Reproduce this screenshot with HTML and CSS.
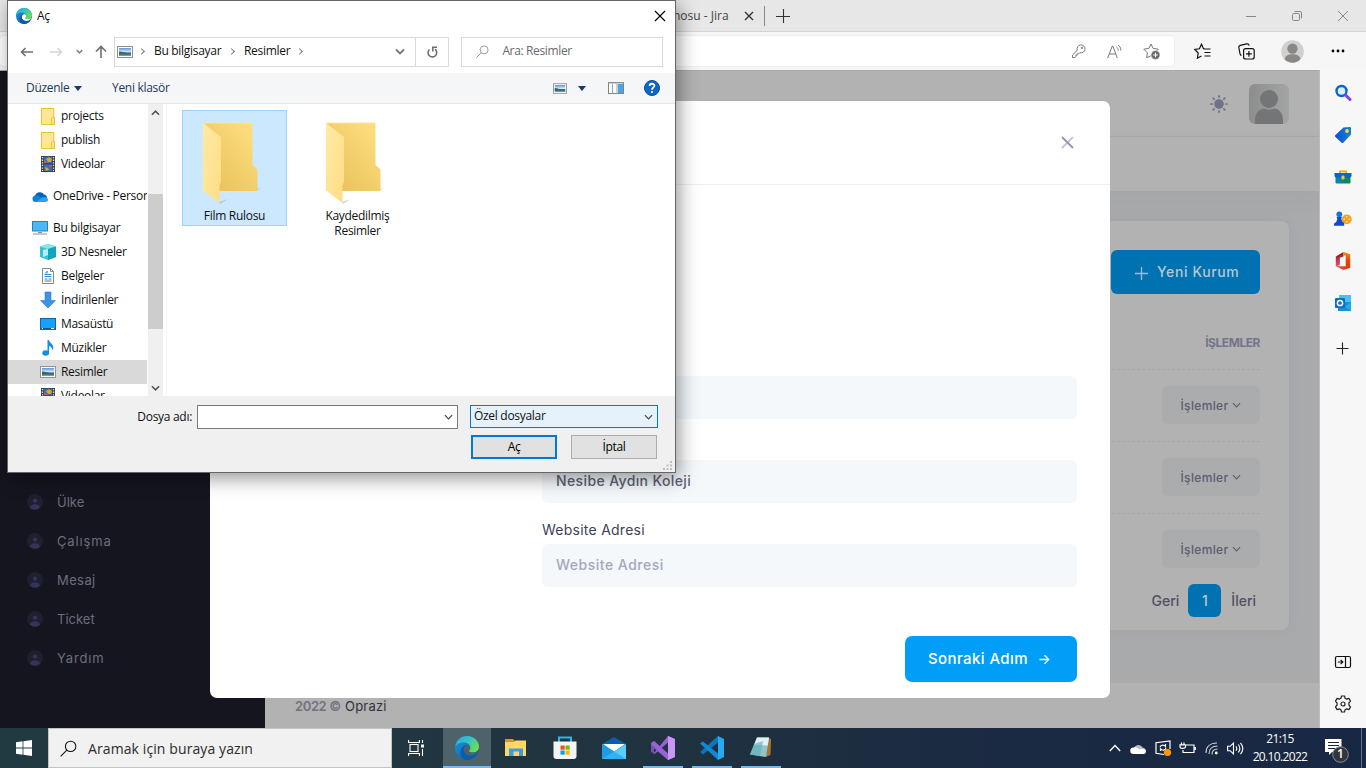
FILE: index.html
```html
<!DOCTYPE html>
<html lang="tr">
<head>
<meta charset="utf-8">
<title>Kurumlar</title>
<link rel="stylesheet" href="styles.css">
</head>
<body>
<svg class="defs" width="0" height="0">
  <defs>
    <linearGradient id="edgeBlue" x1="0" y1="0" x2="1" y2="1"><stop offset="0" stop-color="#1b9de2"/><stop offset="1" stop-color="#0c4a9c"/></linearGradient>
    <linearGradient id="edgeGreen" x1="0" y1="0" x2="1" y2=".6"><stop offset="0" stop-color="#2aa7e8"/><stop offset=".5" stop-color="#33c3c8"/><stop offset="1" stop-color="#6be04c"/></linearGradient>
    <linearGradient id="fBack" x1="0" y1="1" x2="1" y2="0"><stop offset="0" stop-color="#e6bd55"/><stop offset="1" stop-color="#ffe182"/></linearGradient>
    <linearGradient id="fFront" x1="0" y1="0" x2="1" y2="1"><stop offset="0" stop-color="#ffeaa6"/><stop offset="1" stop-color="#ffdd83"/></linearGradient>
    <linearGradient id="sky" x1="0" y1="0" x2="0" y2="1"><stop offset="0" stop-color="#5a93e0"/><stop offset=".5" stop-color="#d9ecfa"/><stop offset=".6" stop-color="#41776d"/><stop offset="1" stop-color="#6fa0c8"/></linearGradient>
    <linearGradient id="tagG" x1="0" y1="0" x2="1" y2="0"><stop offset="0" stop-color="#0a4ee0"/><stop offset="1" stop-color="#1683c4"/></linearGradient>
    <linearGradient id="boxG" x1="0" y1="0" x2="1" y2="0"><stop offset="0" stop-color="#0b84b4"/><stop offset="1" stop-color="#0f8a4a"/></linearGradient>
    <linearGradient id="offG" x1="0" y1="0" x2="0" y2="1"><stop offset="0" stop-color="#8f1414"/><stop offset="1" stop-color="#e8536e"/></linearGradient>
    <linearGradient id="offR" x1="0" y1="0" x2="0" y2="1"><stop offset="0" stop-color="#f98a10"/><stop offset=".5" stop-color="#dd4509"/><stop offset="1" stop-color="#d83b01"/></linearGradient>
    <linearGradient id="avG" x1="0" y1="0" x2="1" y2="0"><stop offset="0" stop-color="#8c8d8d"/><stop offset="1" stop-color="#a3a4a5"/></linearGradient>
    <symbol id="edge" viewBox="0 0 24 24">
      <circle cx="12" cy="12" r="12" fill="url(#edgeBlue)"/>
      <path d="M.3 10.500C1.500 4 6.300 0 12 0c7 0 12 5.300 12 10.800 0 3.700-3 5.800-6 5.800-2.600 0-4-.8-4-1.700 0-.7 1.300-1.200 1.300-3.200C15.300 8.500 12 6.600 8.700 6.600 4.300 6.600 1.300 8.700.3 10.500z" fill="url(#edgeGreen)"/>
      <path d="M8.600 13.500c0-2.700 2-4.300 3.200-4.600 2.300.2 3.500 1.600 3.400 3-.1 1.600-1.200 2-1.200 3 0 1 1.500 1.900 4 1.700 2 0 3.700-.6 4.900-1.900-.9 2.600-3 4.100-5.500 4.600-4.800.7-8.800-2.500-8.800-5.800z" fill="var(--hole, #fff)"/>
      <path d="M8.600 13.500c0 5.800 5.800 8.300 12 5.200-2 3.200-5 5.300-8.600 5.300-3.500 0-6.500-3.200-6.500-7.500 0-4.500 3.500-7.500 6.400-7.600-1.800.7-3.300 2.300-3.300 4.600z" fill="#0d5cab"/>
    </symbol>
    <symbol id="person" viewBox="0 0 16 16">
      <circle cx="8" cy="8" r="8" fill="#1f1f2e"/><circle cx="8" cy="6.600" r="2.200" fill="#34345a"/><path d="M3 13.500c.6-2 2.500-3.200 5-3.200s4.400 1.200 5 3.200c-1.300 1.500-3 2.200-5 2.200s-3.700-.7-5-2.200z" fill="#34345a"/>
    </symbol>
    <symbol id="picture" viewBox="0 0 16 12"><rect x=".5" y=".5" width="15" height="11" fill="#fff" stroke="#8e9297"/><rect x="2" y="2" width="12" height="8" fill="url(#sky)"/><path d="M2 5.500c3 0 5 1.500 12 1.800V8.500H2z" fill="#37695d"/></symbol>
    <symbol id="film" viewBox="0 0 14 16"><path d="M0 0h14v16H0z" fill="#3c3c40"/><path d="M3 .8h8v6.400H3zM3 8.500h8V15H3z" fill="#2f6fc4"/><path d="M5 3l3-2 3 2-1 3H7zM4 11l3 1 1 2-3 1z" fill="#e0a51e"/><path d="M3 4l2 2 3 1H3zM8 9h3v2H9z" fill="#e05b32"/><path d="M1.500 1v14M12.500 1v14" stroke="#e8e8e8" stroke-width="1.300" stroke-dasharray="1.300 1.300"/></symbol>
    <symbol id="smallfolder" viewBox="0 0 14 17"><path d="M.5.500h12.300V9.500h.7v7H.5z" fill="#ffe694" stroke="#e6bf45"/><path d="M10.500 16.500v-6l1-1h2v7z" fill="#ffe28a" stroke="#e6bf45"/></symbol>
    <symbol id="folder" viewBox="0 0 60 86">
      <path d="M18 82l9-3-8 5zM52 70l8-2-5 3z" fill="#9aa5ad" opacity=".45"/>
      <path d="M2 3h48.500a1 1 0 0 1 1 1v41l5 4.500V70a1 1 0 0 1-1 1H18z" fill="url(#fBack)"/>
      <path d="M2 3l18 14v45l-1.500 3v18L2 70.500z" fill="url(#fFront)"/>
      <path d="M2 3h49" stroke="#fbe5a0"/>
    </symbol>
    <symbol id="chev" viewBox="0 0 10 6"><path d="M1 1l4 4 4-4" fill="none" stroke="currentColor" stroke-width="1.300"/></symbol>
    <symbol id="magnify" viewBox="0 0 16 16"><circle cx="10" cy="6" r="4.900" fill="none" stroke="currentColor"/><path d="M6.500 9.500L.6 15.400" stroke="currentColor"/></symbol>
  </defs>
</svg>

<div class="screen">
  <div class="browser">
    <div class="tabstrip">
      <span class="tab-title">nosu - Jira</span>
      <svg class="tab-close" width="10" height="10" viewBox="0 0 10 10"><path d="M1 1l8 8M9 1L1 9" stroke="#333" stroke-width="1.400"/></svg>
      <span class="tab-sep"></span>
      <svg class="tab-new" width="14" height="14" viewBox="0 0 14 14"><path d="M7.500 0v14M0 7.500h14" stroke="#333" stroke-width="1.100"/></svg>
      <div class="window-buttons">
        <svg width="10" height="10" viewBox="0 0 10 10"><path d="M0 5.500h10" stroke="#888"/></svg>
        <svg width="10" height="10" viewBox="0 0 10 10"><rect x=".5" y="2.500" width="7" height="7" rx="1.200" fill="none" stroke="#888"/><path d="M2.500.5H8a1.500 1.500 0 0 1 1.500 1.500v5.500" fill="none" stroke="#888"/></svg>
        <svg width="10" height="10" viewBox="0 0 10 10"><path d="M0 0l10 10M10 0L0 10" stroke="#888"/></svg>
      </div>
    </div>
    <div class="toolbar">
      <div class="address">
        <svg width="14" height="14" viewBox="0 0 14 14" fill="none" stroke="#777"><path d="M5.300 6.300A4 4 0 1 1 7.800 8.700L6.700 9.800H5.200v1.400H3.800v1.300L3 13.500H.5V11z"/><circle cx="10" cy="3.900" r=".8"/></svg>
        <svg width="16" height="15" viewBox="0 0 16 15" fill="none" stroke="#777"><path d="M.7 14L5.300 2h.5L10.300 14M2.300 10h6.500M9.500 3c1.200.8 1.700 2 1.700 3.500M11 1c2 1.200 2.800 3 2.800 5.500" /></svg>
        <svg width="18" height="17" viewBox="0 0 18 17"><path d="M8 1l2.100 4.400 5.200.8-3.500 3.600.6 4.500L8 12.700 3.600 14.800l.8-5L.8 6.200 5.900 5.400z" fill="none" stroke="#777"/><circle cx="12.500" cy="12" r="4.500" fill="#6a6a6a" stroke="#fff" stroke-width=".6"/><path d="M12.500 9.700v4.600M10.200 12h4.600" stroke="#fff"/></svg>
      </div>
      <svg class="tb-fav" width="17" height="17" viewBox="0 0 17 17" fill="none" stroke="#111" stroke-width="1.200"><path d="M11 6l-1.500-.3L7.500 1.200 5.400 5.800.8 6.500 4.200 10l-.8 5.200 4-2.200M11 6h5.500M10.500 9.500h6M10.500 13h6"/></svg>
      <svg class="tb-col" width="17" height="17" viewBox="0 0 17 17" fill="none" stroke="#111" stroke-width="1.200"><rect x="5.600" y="5.600" width="10.600" height="10.400" rx="2"/><path d="M10.900 8v5.800M8 10.900h5.800M3.500 12.500c-.8-.3-1.200-1-1.500-1.800L.8 4.500C.6 3.400 1.200 2.600 2.300 2.300L8.500.9c1.300-.3 2.300.3 2.800 1.700"/></svg>
      <svg class="tb-user" width="23" height="23" viewBox="0 0 23 23"><circle cx="11.500" cy="11.500" r="11.300" fill="#d2d0ce"/><circle cx="11.500" cy="8.600" r="5.200" fill="#8a8886"/><path d="M3.500 19c1-3.300 4-4.700 8-4.700s7 1.400 8 4.700c-2 2.500-5 3.700-8 3.700s-6-1.200-8-3.700z" fill="#8a8886"/></svg>
      <svg class="tb-more" width="14" height="4" viewBox="0 0 14 4"><circle cx="2" cy="2" r="1.400"/><circle cx="7" cy="2" r="1.400"/><circle cx="12" cy="2" r="1.400"/></svg>
    </div>
    <div class="content">
      <div class="page">
        <aside class="menu">
          <div class="menu-item"><svg><use href="#person"/></svg><span>Ülke</span></div>
          <div class="menu-item"><svg><use href="#person"/></svg><span class="wide">Çalışma</span></div>
          <div class="menu-item"><svg><use href="#person"/></svg><span class="mid">Mesaj</span></div>
          <div class="menu-item"><svg><use href="#person"/></svg><span>Ticket</span></div>
          <div class="menu-item"><svg><use href="#person"/></svg><span class="wide">Yardım</span></div>
        </aside>
        <main class="main">
          <header class="page-header">
            <svg width="18" height="18" viewBox="0 0 18 18"><circle cx="9" cy="9" r="4.800" fill="#707286"/><g stroke="#707286" stroke-width="1.700" stroke-linecap="round"><path d="M9 .9v1.200M9 15.900v1.200M.9 9h1.200M15.900 9h1.200M3.200 3.200l.9.9M13.900 13.900l.9.900M3.200 14.800l.9-.9M13.900 4.100l.9-.9"/></g></svg>
            <svg width="40" height="40" viewBox="0 0 40 40"><rect width="40" height="40" rx="6" fill="url(#avG)"/><circle cx="20" cy="15" r="9" fill="#747576"/><path d="M6 40V36c0-7 4-11 9-11.500 3 1.700 7 1.700 10 0 5 .5 9 4.500 9 11.500v4z" fill="#747576"/></svg>
          </header>
          <div class="subheader"></div>
          <div class="workspace">
            <section class="card">
              <button class="add"><svg width="13" height="13" viewBox="0 0 13 13"><path d="M6.500 0v13M0 6.500h13" stroke="#a6bcc9" stroke-width="1.300"/></svg><span>Yeni Kurum</span></button>
              <div class="th">İŞLEMLER</div>
              <div class="row"><button class="act">İşlemler<svg><use href="#chev"/></svg></button></div>
              <div class="row"><button class="act">İşlemler<svg><use href="#chev"/></svg></button></div>
              <div class="row last"><button class="act">İşlemler<svg><use href="#chev"/></svg></button></div>
              <div class="pager"><span>Geri</span><b>1</b><span>İleri</span></div>
            </section>
          </div>
          <footer class="page-footer"><b>2022 ©</b><span>Oprazi</span></footer>
        </main>
      </div>
      <nav class="edgebar">
        <svg viewBox="0 0 18 18"><circle cx="7.500" cy="7" r="5" fill="#d8eefc" stroke="#0c62d2" stroke-width="2.400"/><path d="M11.500 11l4.500 4.500" stroke="#7a3ff0" stroke-width="3" stroke-linecap="round"/></svg>
        <svg viewBox="0 0 18 18"><path d="M9.500 1.500L16 1c.6 0 1 .5 1 1v6.500L9.500 16.500c-.7.700-1.500.7-2.200 0L1.500 11c-.7-.7-.7-1.400 0-2.100z" fill="url(#tagG)"/><circle cx="13" cy="5" r="1.900" fill="#fdd24a"/></svg>
        <svg viewBox="0 0 18 18"><path d="M6 5.500V3.300h6v2.200" fill="none" stroke="#e6a515" stroke-width="1.800"/><path d="M1.500 8h15v6.500a1 1 0 0 1-1 1h-13a1 1 0 0 1-1-1z" fill="url(#boxG)"/><path d="M.5 5h17v3l-1 1.500h-15L.5 8z" fill="#0d62cf"/><rect x="7.500" y="7.500" width="3" height="4" rx="1" fill="#fbc12e"/></svg>
        <svg viewBox="0 0 18 18"><circle cx="12.800" cy="9.300" r="4.900" fill="#f0a41d"/><g fill="#fff0c0"><circle cx="12.800" cy="6.800" r=".8"/><circle cx="12.800" cy="11.800" r=".8"/><circle cx="10.300" cy="9.300" r=".8"/><circle cx="15.300" cy="9.300" r=".8"/></g><circle cx="5.300" cy="4.300" r="2.900" fill="#1773d8"/><path d="M2.500 7h5.500l-.6 1.500c.2 2 1 3.500 2.800 4.500v2.800H0V13.500c2-1 3-2.500 3.300-4.800z" fill="#1247cf"/></svg>
        <svg viewBox="0 0 18 20"><path d="M9.500 0v5L5.500 6.500v8L1 16V5z" fill="url(#offG)"/><path d="M9.500 0L17 2.500v15L9.500 20V16.500L12 16V4L9.500 3.500z" fill="url(#offR)"/><path d="M1 15.500l11 .7-2.500 3.800z" fill="#e0433a"/></svg>
        <svg viewBox="0 0 18 18"><rect x="5" y="1" width="12" height="10" fill="#45c1f2"/><path d="M4 8h13v9H4z" fill="#1490df"/><path d="M11 13l6-5v9z" fill="#28a8ea"/><rect x="1" y="4" width="10" height="10" rx="1" fill="#0f6cbd"/><circle cx="6" cy="9" r="2.600" fill="none" stroke="#fff" stroke-width="1.500"/></svg>
        <svg class="plus" viewBox="0 0 18 18"><path d="M8.500 2.500v12M2.500 8.500h12" stroke="#222" stroke-width="1.100"/></svg>
        <span class="edgebar-line"></span>
        <svg viewBox="0 0 18 18" fill="none" stroke="#111" stroke-width="1.200"><rect x="1.500" y="3.500" width="15" height="11" rx="1.500"/><path d="M11.500 3.500v11M3.800 9h5M6.600 6.900L8.800 9l-2.200 2.100"/></svg>
        <svg viewBox="0 0 18 18" fill="none" stroke="#222" stroke-width="1.200"><circle cx="9" cy="9" r="2"/><path d="M7.500 1h3l.6 2.300 1.500.8 2.300-.7 1.600 2.700L14.900 8v2l1.600 1.900-1.600 2.700-2.300-.7-1.500.8-.6 2.300h-3l-.6-2.300-1.500-.8-2.300.7L1.500 11.900 3.100 10V8L1.500 6.100l1.600-2.700 2.300.7 1.500-.8z" stroke-linejoin="round"/></svg>
      </nav>
    </div>
  </div>

  <footer class="taskbar">
    <div class="start"><svg width="16" height="16" viewBox="0 0 16 16" fill="#fff"><path d="M0 2.200L6.600 1.300v6.300H0zM7.400 1.200L16 0v7.600H7.400zM0 8.400h6.600v6.300L0 13.800zM7.400 8.400H16V16l-8.600-1.200z"/></svg></div>
    <div class="search"><svg width="17" height="17"><use href="#magnify"/></svg><span>Aramak için buraya yazın</span></div>
    <div class="task view"><svg width="17" height="16" viewBox="0 0 17 16" fill="none" stroke="#fff" stroke-width="1.100"><rect x="2" y="4.500" width="8" height="7"/><path d="M.6 0v2.500h10.800V0M.6 16v-2.500h10.800V16M14.500 0v3M14.500 9v7"/><path d="M13 4.500h3v3h-3z" fill="#fff" stroke="none"/></svg></div>
    <div class="task active on"><svg class="on-dark" width="24" height="24"><use href="#edge"/></svg></div>
    <div class="task"><svg width="24" height="20" viewBox="0 0 24 20"><path d="M1 1h8l2 2v3H1z" fill="#d99a12"/><path d="M1 4h9l1.500-1.500H22V18H1z" fill="#ffd766"/><path d="M5 10.500h14V18h-4v-4.500H9.500V18H5z" fill="#3f9bdf"/></svg></div>
    <div class="task"><svg width="24" height="24" viewBox="0 0 24 24"><path d="M6 6V1.500h12V6" fill="none" stroke="#2fb3ee" stroke-width="2"/><path d="M.5 5.500h23V20a3 3 0 0 1-3 3h-17a3 3 0 0 1-3-3z" fill="#f4f4f4"/><path d="M7.500 9.500h4.200v4.200H7.500z" fill="#f25022"/><path d="M12.500 9.500h4.200v4.200h-4.200z" fill="#7fba00"/><path d="M7.500 14.500h4.200v4.200H7.500z" fill="#00a4ef"/><path d="M12.500 14.500h4.200v4.200h-4.200z" fill="#ffb900"/></svg></div>
    <div class="task"><svg width="24" height="22" viewBox="0 0 24 22"><path d="M0 7l12-7 12 7v3H0z" fill="#0d5cad"/><path d="M1 7h22l-11 8z" fill="#fff"/><path d="M0 7l12 7.500L24 7v15H0z" fill="#2bb3f3"/><path d="M0 7l12 7.500L0 22z" fill="#1d9ce6"/><path d="M12 14.500L24 7v15z" fill="#57cdf9"/></svg></div>
    <div class="task on first"><svg width="24" height="24" viewBox="0 0 24 24"><path d="M0 7l3-2 14 13V24L3 12.500v5L0 16z" fill="#7b4fb4"/><path d="M3 17L17 0l7 3v18l-7 3L0 8v-.5L3 5l14 12.500v-11L3 18.500z" fill="#9861d8"/><path d="M17 0l7 3v18l-7 3z" fill="#c796f7"/></svg></div>
    <div class="task on"><svg width="24" height="24" viewBox="0 0 24 24"><path d="M0 16L18 0v6.500L3 18.500z" fill="#0b76bd"/><path d="M0 7.500l3-2L18 17.500V24z" fill="#1488d0"/><path d="M18 0l6 3v18l-6 3z" fill="#29a9f2"/></svg></div>
    <div class="task on"><svg width="24" height="24" viewBox="0 0 24 24"><path d="M19 2l3 1-.5 16-5 2z" fill="#a7772f"/><path d="M8 1.500h12l-3 19.500-16-2.500z" fill="#8fc6ce"/><path d="M8 1.500h12l-1.300 8L5 9z" fill="#dff1f2"/><path d="M5 8l9-3-3 15-10-1.500z" fill="#62aeb8" opacity=".65"/></svg></div>
    <div class="tray">
      <svg class="t-up" width="12" height="8" viewBox="0 0 12 8"><path d="M.8 7L6 1.500 11.200 7" fill="none" stroke="#fff" stroke-width="1.300"/></svg>
      <svg class="t-cloud" width="17" height="11" viewBox="0 0 17 11"><path d="M4 7a4.500 4.500 0 0 1 8.500-2.500C15 5 16 6.500 16 8H4z" fill="#b9bec7"/><path d="M3.500 11a3.200 3.200 0 0 1 0-6.500C6 3.800 8 5 9 6.500c3-1.500 7-.5 7 2 0 1.500-1 2.500-2.500 2.500z" fill="#fff"/></svg>
      <svg class="t-upd" width="17" height="17" viewBox="0 0 17 17" fill="none" stroke="#fff" stroke-width="1.200"><path d="M9 14.500L1 13.300V2.700L15 1v8M5 7c1-2.500 4-2.500 5.500-.5V4M11 8c-.7 2.500-3.800 2.700-5.500.8V11"/><circle cx="12.500" cy="12.500" r="3.600" fill="#ff9800" stroke="none"/></svg>
      <svg class="t-bat" width="17" height="12" viewBox="0 0 17 12" fill="none" stroke="#fff" stroke-width="1.200"><path d="M6.500 3H15v7.500H4V8M2.500.5v2M5 .5v2M1 2.800h5.500v2C6.500 7 1 7 1 4.800zM16.300 5v3"/></svg>
      <svg class="t-wifi" width="14" height="13" viewBox="0 0 14 13" fill="none" stroke="#cfd5de" stroke-width="1.100"><path d="M1 11C1 5 5 1 12 1M4 12c0-5 3-8 8.500-8M7 12.500c0-3.500 2-5.500 5.500-5.500"/><circle cx="11.300" cy="11" r="1.400" fill="#fff" stroke="none"/></svg>
      <svg class="t-vol" width="17" height="13" viewBox="0 0 17 13" fill="none" stroke="#fff" stroke-width="1.100"><path d="M.6 4.300h2.500L6.500 1v11L3.100 8.700H.6zM9 4.300c1 1.400 1 3 0 4.400M11.300 2.500c2 2.600 2 5.400 0 8M13.500.8c3 3.800 3 7.600 0 11.400"/></svg>
      <div class="clock"><span>21:15</span><span class="date">20.10.2022</span></div>
      <div class="notes"><svg width="24" height="26" viewBox="0 0 24 26"><path d="M0 0h16.500v13H7l-3 3v-3H0z" fill="#fff"/><path d="M3 3.500h11M3 6.500h11M3 9.500h7" stroke="#1a2740"/><circle cx="15.500" cy="15.500" r="7.800" fill="#32363c" stroke="#8a8f96"/></svg><b>1</b></div>
      <span class="peek"></span>
    </div>
  </footer>

  <section class="modal">
    <header class="modal-head"><svg width="13" height="13" viewBox="0 0 13 13"><path d="M11.500 1.500l-10 10" stroke="#c4c6d5" stroke-width="1.800" stroke-linecap="round"/><path d="M1.500 1.500l10 10" stroke="#9195b0" stroke-width="1.800" stroke-linecap="round"/></svg></header>
    <div class="modal-body">
      <div class="field"></div>
      <label>&nbsp;</label>
      <div class="field"><span class="value">Nesibe Aydın Koleji</span></div>
      <label>Website Adresi</label>
      <div class="field"><span class="placeholder">Website Adresi</span></div>
    </div>
    <button class="next"><span>Sonraki Adım</span><svg width="11" height="11" viewBox="0 0 11 11" fill="none" stroke="#fff" stroke-width="1.300"><path d="M.5 5.500h9M5.500 1.200l4.300 4.300-4.300 4.300"/></svg></button>
  </section>

  <section class="dialog">
    <header class="d-title"><svg width="16" height="16"><use href="#edge"/></svg><span>Aç</span><svg class="d-close" width="10" height="10" viewBox="0 0 10 10"><path d="M0 0l10 10M10 0L0 10" stroke="#000" stroke-width="1.200"/></svg></header>
    <div class="d-nav">
      <svg class="n-back" width="13" height="10" viewBox="0 0 13 10" fill="none" stroke="#6f6f6f" stroke-width="1.600"><path d="M13 5H1.500M5.500 1l-4 4 4 4"/></svg>
      <svg class="n-fwd" width="13" height="10" viewBox="0 0 13 10" fill="none" stroke="#d5d5d5" stroke-width="1.600"><path d="M0 5h11.500M7.500 1l4 4-4 4"/></svg>
      <svg class="n-drop" width="7" height="5" viewBox="0 0 10 6"><path d="M1 1l4 4 4-4" fill="none" stroke="#888" stroke-width="2.200"/></svg>
      <svg class="n-up" width="12" height="13" viewBox="0 0 12 13" fill="none" stroke="#6f6f6f" stroke-width="1.600"><path d="M6 13V1.500M1 6.500l5-5 5 5"/></svg>
      <div class="crumbs">
        <svg width="16" height="12"><use href="#picture"/></svg>
        <i class="arr"></i><span class="c1">Bu bilgisayar</span><i class="arr"></i><span class="c2">Resimler</span><i class="arr"></i>
        <svg class="c-drop" width="10" height="7" viewBox="0 0 10 6"><path d="M1 1l4 4 4-4" fill="none" stroke="#7a7a7a" stroke-width="1.800"/></svg>
      </div>
      <div class="reload"><svg width="11" height="12" viewBox="0 0 11 12" fill="none" stroke="#6f6f6f" stroke-width="1.600"><path d="M8.600 3.500A4.300 4.300 0 1 1 3 3.200M1 1.200h4.200v4.300"/></svg></div>
      <div class="d-search"><svg width="13" height="13"><use href="#magnify"/></svg><span>Ara: Resimler</span></div>
    </div>
    <div class="d-tools">
      <span class="t1">Düzenle</span><i class="tri"></i><span class="t2">Yeni klasör</span>
      <svg class="x1" width="14" height="11"><use href="#picture"/></svg><i class="tri x2"></i>
      <svg class="x3" width="16" height="12" viewBox="0 0 16 12"><rect x=".5" y=".5" width="15" height="11" fill="#fff" stroke="#7d8287"/><path d="M0 1h16M4.500 2v10M9 2v10" stroke="#9a9ea3"/><path d="M10 2h5v9h-5z" fill="#4ea2e4"/></svg>
      <svg class="x4" width="16" height="16" viewBox="0 0 16 16"><circle cx="8" cy="8" r="7.500" fill="#0b68c9" stroke="#0a4c96"/><path d="M5.600 6c.1-3 4.800-2.900 4.800-.3C10.400 7.500 8 7.600 8 9.700" fill="none" stroke="#fff" stroke-width="1.800"/><circle cx="8" cy="12" r="1.100" fill="#fff"/></svg>
    </div>
    <div class="d-body">
      <div class="tree">
        <div class="ti sub"><svg width="14" height="17"><use href="#smallfolder"/></svg><span>projects</span></div>
        <div class="ti sub"><svg width="14" height="17"><use href="#smallfolder"/></svg><span>publish</span></div>
        <div class="ti sub"><svg width="14" height="16"><use href="#film"/></svg><span>Videolar</span></div>
        <div class="ti top"><svg width="16" height="11" viewBox="0 0 16 11"><path d="M3 5A5 5 0 0 1 12 3.500C15 4 15 6 15 8H4z" fill="#0a5fb8"/><path d="M3.500 11A3.300 3.300 0 0 1 3 4.500c2-.8 4 0 5 1.500l5 2-1 3z" fill="#1180d8"/><path d="M4 11l6-4.500c3-1.500 6 0 6 2.200 0 1.300-1 2.300-2.500 2.300z" fill="#2aa4ec"/></svg><span>OneDrive - Person</span></div>
        <div class="ti top"><svg width="16" height="14" viewBox="0 0 16 14"><rect x=".5" y=".5" width="15" height="9.500" fill="#4cb9f7" stroke="#2f7fb6"/><path d="M6 11h4v1H6zM1 12.500h14v1H1z" fill="#7e94a5"/></svg><span>Bu bilgisayar</span></div>
        <div class="ti sub"><svg width="16" height="16" viewBox="0 0 16 16"><path d="M8 0l8 2.500V13L8 16 0 13V2.500z" fill="#35c3d4"/><path d="M8 0l8 2.500L8 5 0 2.500z" fill="#8be4ec"/><path d="M8 5l8-2.500V13L8 16z" fill="#11a4bd"/><path d="M3 6l5-1v6l-5 2z" fill="#b4f0f3"/></svg><span>3D Nesneler</span></div>
        <div class="ti sub"><svg width="12" height="16" viewBox="0 0 12 16"><path d="M.5.500h8l3 3v12H.5z" fill="#fff" stroke="#85898d"/><path d="M8.500.5v3h3" fill="none" stroke="#85898d"/><path d="M2.500 6.500h7M2.500 8.500h7M5 3.500l-2 2M5 3v2.500" stroke="#2c86d1"/><path d="M2.500 11h3M2.500 13h7M6.500 11h3" stroke="#777"/></svg><span>Belgeler</span></div>
        <div class="ti sub"><svg width="16" height="16" viewBox="0 0 16 16"><path d="M5 0h6v8.500h4.500L8 16 .5 8.500H5z" fill="#3b94e2" stroke="#2b7ec9" stroke-width=".6"/></svg><span>İndirilenler</span></div>
        <div class="ti sub"><svg width="16" height="12" viewBox="0 0 16 12"><rect x=".5" y=".5" width="15" height="11" fill="#17a0fa" stroke="#0a66b0"/><path d="M1 10.500h14" stroke="#0b5596"/><path d="M2 10.500h1M11 10.500h3" stroke="#fff"/></svg><span>Masaüstü</span></div>
        <div class="ti sub"><svg width="12" height="16" viewBox="0 0 12 16"><ellipse cx="3.700" cy="13" rx="3.400" ry="2.800" fill="#0f8fe8"/><path d="M5.500 0H7c.3 3 4.600 4 4.300 7.500-.1 1.300-.6 2-1.300 3 .4-2.500-.6-4-3-4.500V13H5.500z" fill="#0f8fe8"/></svg><span>Müzikler</span></div>
        <div class="ti sub sel"><svg width="16" height="12"><use href="#picture"/></svg><span>Resimler</span></div>
        <div class="ti sub"><svg width="14" height="16"><use href="#film"/></svg><span>Videolar</span></div>
      </div>
      <div class="scroll"><svg width="9" height="6" viewBox="0 0 10 6"><path d="M1 5l4-4 4 4" fill="none" stroke="#555" stroke-width="1.800"/></svg><span class="thumb"></span><svg class="sd" width="9" height="6" viewBox="0 0 10 6"><path d="M1 1l4 4 4-4" fill="none" stroke="#555" stroke-width="1.800"/></svg></div>
      <div class="files">
        <div class="file chosen"><svg width="60" height="86"><use href="#folder"/></svg><span>Film Rulosu</span></div>
        <div class="file"><svg width="60" height="86"><use href="#folder"/></svg><span>Kaydedilmiş Resimler</span></div>
      </div>
    </div>
    <div class="d-foot">
      <div class="f-row"><span class="f-label">Dosya adı:</span><div class="combo"><svg><use href="#chev"/></svg></div><div class="combo type"><span>Özel dosyalar</span><svg><use href="#chev"/></svg></div></div>
      <div class="f-row btns"><button class="ok">Aç</button><button>İptal</button></div>
      <svg class="grip" width="9" height="9" viewBox="0 0 9 9" fill="#bdbdbd"><path d="M7 0h2v2H7zM7 3.500h2v2H7zM7 7h2v2H7zM3.500 3.500h2v2h-2zM3.500 7h2v2h-2zM0 7h2v2H0z"/></svg>
    </div>
  </section>
</div>
</body>
</html>
```
FILE: styles.css
```css
* { box-sizing: border-box; }
body { margin: 0; overflow: hidden; font-family: "Open Sans", "Noto Sans", sans-serif; }
svg { display: block; flex: none; overflow: visible; }
button { border: 0; font: inherit; padding: 0; }
.defs { position: absolute; }
.screen { position: relative; width: 1366px; height: 768px; overflow: hidden; display: flex; flex-direction: column; }

/* browser chrome */
.browser { flex: none; height: 728px; display: flex; flex-direction: column; }
.tabstrip { flex: none; height: 32px; background: #e7e7e7; border-bottom: 1px solid #d3d3d3; display: flex; align-items: center; padding-left: 673px; }
.tab-title { width: 70px; font-size: 12px; letter-spacing: 0; color: #444; white-space: nowrap; }
.tab-close { margin-left: 1px; }
.tab-sep { width: 1px; height: 20px; background: #888; margin-left: 10px; }
.tab-new { margin-left: 11px; }
.window-buttons { margin-left: auto; display: flex; gap: 36px; padding-right: 18px; }
.toolbar { flex: none; height: 38px; background: #f6f6f6; display: flex; align-items: center; }
.address { width: 1174px; height: 30px; background: #fff; border-radius: 4px; box-shadow: 0 0 2px #ddd; display: flex; align-items: center; justify-content: flex-end; gap: 20px; padding-right: 13px; }
.address svg:first-child { margin-right: 1px; }
.tb-fav { margin-left: 20px; }
.tb-col { margin-left: 27px; }
.tb-user { margin-left: 26px; }
.tb-more { margin-left: 27px; }
.content { flex: none; height: 658px; display: flex; }

/* application page */
.page { width: 1320px; height: 658px; border-top: 1px solid #a9a9a9; border-right: 1px solid #bcbcbc; display: flex; font-family: Inter, "Open Sans", sans-serif; }
.menu { width: 265px; background: #15151f; padding-top: 411px; }
.menu-item { height: 39px; display: flex; align-items: center; gap: 14px; padding-left: 27px; font-size: 13px; color: #6c6d7b; }
.menu-item svg { width: 16px; height: 16px; }
.menu-item .wide { letter-spacing: .85px; }
.menu-item .mid { letter-spacing: .4px; }
.main { flex: 1; background: #a9aaac; display: flex; flex-direction: column; }
.page-header { height: 66px; background: #b2b2b2; border-bottom: 1px solid #a8a8aa; display: flex; align-items: center; justify-content: flex-end; gap: 21px; padding-right: 30px; }
.subheader { height: 54px; background: #b2b2b2; box-shadow: 0 8px 20px rgba(90, 95, 105, .06); }
.workspace { height: 492px; padding: 30px 30px 53px; }
.card { height: 409px; background: #b2b2b2; border-radius: 8px; box-shadow: 0 0 12px rgba(90, 95, 105, .08); padding: 29px 29px 0; display: flex; flex-direction: column; align-items: flex-end; }
.add { width: 149px; height: 44px; background: #0071b1; border-radius: 6px; color: #b5c8d3; font-size: 14px; font-weight: 500; letter-spacing: .6px; display: flex; align-items: center; gap: 9px; padding: 0 0 2px 24px; white-space: nowrap; }
.add svg { margin-top: 4px; }
.th { height: 76px; width: 100%; text-align: right; padding-top: 38px; border-bottom: 1px dashed #a6a7a9; font-size: 12px; font-weight: 700; line-height: 22px; color: #74758a; letter-spacing: -.45px; }
.row { height: 72px; width: 100%; border-bottom: 1px dashed #a6a7a9; display: flex; justify-content: flex-end; padding-top: 16px; }
.row.last { height: 70px; border: 0; }
.act { width: 98px; height: 38px; background: #abacae; border-radius: 6px; color: #5c5d70; font-size: 12px; font-weight: 500; letter-spacing: .35px; display: flex; align-items: center; justify-content: center; gap: 4px; }
.act svg { width: 9px; height: 6px; }
.pager { display: flex; align-items: center; height: 33px; font-size: 14px; font-weight: 500; color: #4f5063; padding-right: 4px; gap: 9px; }
.pager b { width: 33px; height: 33px; margin-right: 1px; border-radius: 6px; background: #0071b1; color: #b9cbd6; text-align: center; line-height: 33px; font-weight: 500; }
.page-footer { height: 45px; background: #b2b2b2; padding: 0 0 0 30px; display: flex; align-items: center; gap: 6px; font-size: 13px; color: #30313b; }
.page-footer b { width: 44px; font-weight: 600; letter-spacing: -.4px; color: #727382; white-space: nowrap; }
.page-footer span { letter-spacing: .2px; }
.edgebar { width: 46px; background: #f7f7f7; display: flex; flex-direction: column; align-items: center; padding-top: 14px; }
.edgebar svg { width: 18px; height: 18px; margin-bottom: 24px; }
.edgebar svg.plus { margin-top: 4px; }
.edgebar-line { width: 28px; height: 1px; background: #bbb; margin: 257px 0 14px; }

/* modal over the page */
.modal { position: absolute; left: 210px; top: 101px; width: 900px; height: 597px; background: #fff; border-radius: 7px; font-family: Inter, "Open Sans", sans-serif; display: flex; flex-direction: column; color: #3f4254; }
.modal-head { height: 84px; border-bottom: 1px solid #eee; display: flex; align-items: center; justify-content: flex-end; padding-right: 36px; }
.modal-body { padding: 191px 33px 0 332px; font-size: 14px; }
.field { height: 43px; border-radius: 6px; background: #f4f8fb; padding-left: 14px; line-height: 42px; font-weight: 500; }
.value { color: #5e6278; letter-spacing: .38px; }
.placeholder { color: #a6a7bd; letter-spacing: .5px; }
.modal label { display: block; height: 41px; padding-top: 16px; line-height: 21px; letter-spacing: .25px; }
.next { align-self: flex-end; width: 172px; height: 46px; margin: 49px 33px 0 0; background: #009ef7; border-radius: 7px; color: #fff; font-size: 15px; font-weight: 500; display: flex; align-items: center; gap: 11px; padding-left: 23px; white-space: nowrap; }
.next span { letter-spacing: .4px; padding-bottom: 1px; }

/* file dialog */
.dialog { position: absolute; left: 7px; top: 0; width: 669px; height: 473px; border: 1px solid #666; background: #fff; box-shadow: 3px 5px 18px rgba(0, 0, 0, .42); font-size: 12px; letter-spacing: -.3px; color: #111; display: flex; flex-direction: column; white-space: nowrap; }
.d-title { height: 29px; display: flex; align-items: center; gap: 5px; padding-left: 8px; }
.d-close { margin: 0 10px 0 auto; }
.d-nav { height: 43px; display: flex; align-items: center; padding: 0 12px; }
.d-nav span, .d-tools span, .ti span, .f-row span { padding-bottom: 2px; }
.n-fwd { margin-left: 17px; }
.n-drop { margin-left: 13px; }
.n-up { margin-left: 12px; }
.crumbs { width: 303px; height: 30px; margin-left: 7px; border: 1px solid #d9d9d9; display: flex; align-items: center; padding: 0 10px 0 2px; }
.arr { width: 5px; height: 5px; border: solid #777; border-width: 1.5px 1.5px 0 0; transform: rotate(45deg) scale(.95); }
.crumbs svg + .arr { margin-left: 6px; }
.c1 { margin: 0 7px 0 10px; width: 68px; }
.c2 { margin: 0 6px 0 10px; width: 47px; }
.c-drop { margin-left: auto; }
.reload { width: 33px; height: 30px; border: 1px solid #d9d9d9; border-left: 0; display: flex; align-items: center; justify-content: center; }
.reload svg { transform: scaleX(-1); }
.d-search { width: 202px; height: 30px; margin-left: 12px; border: 1px solid #d9d9d9; display: flex; align-items: center; gap: 13px; padding-left: 14px; color: #6a6a6a; letter-spacing: -.35px; }
.d-search svg { color: #888; }
.d-tools { height: 31px; background: #f4f6f8; border-bottom: 1px solid #e5e7ea; display: flex; align-items: center; padding: 0 15px 0 18px; color: #1e395b; }
.t1 { width: 43px; }
.tri { border: 4px solid transparent; border-top: 5px solid #1e395b; border-bottom: 0; margin-left: 5px; }
.t2 { margin-left: 30px; }
.x1 { margin-left: auto; }
.x2 { margin-left: 11px; }
.x3 { margin-left: 22px; }
.x4 { margin-left: 20px; }
.d-body { height: 292px; display: flex; }
.tree { width: 139px; overflow: hidden; }
.ti { height: 24px; display: grid; grid-template-columns: 16px 1fr; align-items: center; gap: 5px; }
.ti svg { margin: 0 auto; }
.ti.sub { padding-left: 32px; }
.ti.top { margin-top: 8px; padding-left: 24px; }
.sel { background: #d9d9d9; }
.scroll { width: 17px; background: #f0f0f0; border: solid #fff; border-width: 0 1px; display: flex; flex-direction: column; align-items: center; padding: 6px 0 5px; }
.thumb { width: 15px; height: 135px; background: #cdcdcd; margin-top: 78px; }
.sd { margin-top: auto; }
.files { flex: 1; margin-left: 2px; border-left: 1px solid #f5f5f5; display: flex; align-items: flex-start; gap: 18px; padding: 6px 0 0 15px; }
.file { width: 105px; height: 116px; border: 1px solid transparent; display: flex; flex-direction: column; padding: 9px 6px 0 18px; }
.file span { margin: 2px 12px 0 0; width: 66px; align-self: center; white-space: normal; text-align: center; line-height: 15px; }
.chosen { background: #cce8ff; border-color: #99d1ff; }
.d-foot { position: relative; flex: 1; background: #f0f0f0; padding: 9px 17px 0 0; }
.f-row { display: flex; justify-content: flex-end; align-items: center; height: 24px; }
.f-label { margin-right: 5px; }
.combo { width: 261px; height: 24px; border: 1px solid #7a7a7a; background: #fff; margin-right: 12px; display: flex; align-items: center; justify-content: flex-end; padding-right: 4px; }
.combo svg { width: 9px; height: 6px; color: #444; }
.combo.type { width: 188px; height: 23px; margin: 0 0 1px; background: #e5f1fb; border-color: #0078d7; justify-content: space-between; padding-left: 3px; }
.btns { margin-top: 6px; gap: 14px; padding-right: 1px; }
.btns button { width: 86px; height: 24px; background: #e1e1e1; border: 1px solid #adadad; letter-spacing: -.3px; padding-bottom: 1px; }
.btns .ok { border: 2px solid #0078d7; }
.grip { position: absolute; right: 3px; bottom: 2px; }

/* taskbar */
.taskbar { height: 40px; background: linear-gradient(90deg, #213a42, #20343f 45%, #1b2a42 72%, #182743); display: flex; color: #fff; }
.start { width: 48px; display: flex; align-items: center; justify-content: center; }
.search { width: 344px; background: #f1f1f1; border: 1px solid #c4c4c4; display: flex; align-items: center; gap: 11px; padding-left: 11px; font-size: 14px; color: #2b2b2b; letter-spacing: .1px; }
.search svg { color: #111; }
.task { width: 41px; margin-right: 8px; display: flex; align-items: center; justify-content: center; border-bottom: 2px solid transparent; padding-top: 2px; }
.task.view { width: 48px; margin-right: 3px; padding-top: 1px; }
.task.on { width: 40px; margin-right: 9px; border-bottom-color: #76b9ed; }
.task.active { width: 48px; margin-right: 4px; background: #4e626a; }
.task.first { margin-left: 1px; }
.on-dark { --hole: #4e626a; }
.tray { margin-left: auto; display: flex; align-items: center; height: 40px; }
.t-cloud { margin-left: 9px; }
.t-upd { margin-left: 8px; }
.t-bat { margin-left: 7px; }
.t-wifi { margin-left: 9px; }
.t-vol { margin-left: 8px; }
.clock { width: 56px; margin-left: 8px; display: flex; flex-direction: column; align-items: center; font-size: 12px; line-height: 18px; letter-spacing: -.65px; }
.notes { position: relative; width: 24px; height: 26px; margin: 7px 0 0 17px; }
.notes b { position: absolute; left: 12px; top: 7px; font-size: 12px; line-height: 16px; font-weight: 600; }
.peek { width: 1px; height: 40px; background: #62708a; margin: 0 4px 0 12px; }
```
